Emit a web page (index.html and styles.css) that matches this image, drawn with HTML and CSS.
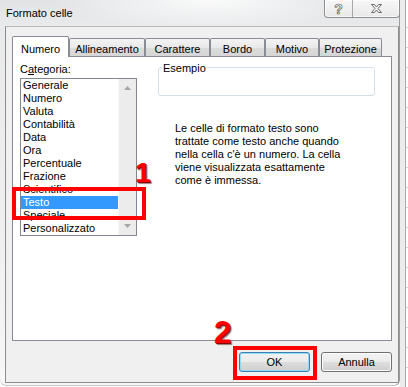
FILE: index.html
```html
<!DOCTYPE html>
<html lang="it">
<head>
  <meta charset="UTF-8" />
  <meta name="viewport" content="width=device-width, initial-scale=1.0"/>
  <title>Formato celle</title>
  <link rel="stylesheet" href="styles.css">
</head>
<body>
  <div class="screen">
    <div class="window">
      <div class="titlebar">
        <span class="title">Formato celle</span>
        <div class="caption-buttons">
          <span class="cap-btn cap-help">?</span>
          <span class="cap-btn cap-close">
            <svg width="13" height="11" viewBox="0 0 13 11">
              <polygon points="1.5,1.5 4.5,1.5 6.5,4 8.5,1.5 11.5,1.5 8,5.5 11.5,9.5 8.5,9.5 6.5,7 4.5,9.5 1.5,9.5 5,5.5" fill="#f6f6f6" stroke="#6a6a6a" stroke-width="1" stroke-linejoin="round"/>
            </svg>
          </span>
        </div>
      </div>

      <div class="client">
        <div class="tabs">
          <div class="tab active tab-numero">Numero</div>
          <div class="tab tab-allineamento">Allineamento</div>
          <div class="tab tab-carattere">Carattere</div>
          <div class="tab tab-bordo">Bordo</div>
          <div class="tab tab-motivo">Motivo</div>
          <div class="tab tab-protezione">Protezione</div>
        </div>

        <div class="panel">
          <div class="col-left">
            <div class="label">C<u>a</u>tegoria:</div>
            <div class="listbox">
              <ul class="items">
                <li>Generale</li>
                <li>Numero</li>
                <li>Valuta</li>
                <li>Contabilità</li>
                <li>Data</li>
                <li>Ora</li>
                <li>Percentuale</li>
                <li>Frazione</li>
                <li>Scientifico</li>
                <li class="selected">Testo</li>
                <li>Speciale</li>
                <li>Personalizzato</li>
              </ul>
              <div class="scrollbar">
                <svg width="7" height="4" viewBox="0 0 7 4"><polygon points="3.5,0 7,4 0,4" fill="#a6a6a6"/></svg>
                <svg width="7" height="4" viewBox="0 0 7 4"><polygon points="0,0 7,0 3.5,4" fill="#a6a6a6"/></svg>
              </div>
            </div>
          </div>

          <div class="col-right">
            <div class="sample"><span class="sample-label">Esempio</span></div>
            <p class="desc">
              Le celle di formato testo sono<br>
              trattate come testo anche quando<br>
              nella cella c'è un numero. La cella<br>
              viene visualizzata esattamente<br>
              come è immessa.
            </p>
          </div>
        </div>

        <div class="footer">
          <button class="btn default">OK</button>
          <button class="btn">Annulla</button>
        </div>
      </div>
    </div>
    <div class="sheet"></div>
  </div>

  <!-- annotazioni -->
  <div class="mark mark-list"></div>
  <div class="num num-1">1</div>
  <div class="mark mark-ok"></div>
  <div class="num num-2">2</div>
</body>
</html>
```

FILE: styles.css
```css
* {
  margin: 0;
  padding: 0;
  box-sizing: border-box;
}

body {
  width: 408px;
  height: 387px;
  position: relative;
  overflow: hidden;
  background: #fff;
  font-family: "Liberation Sans", Arial, sans-serif;
  font-size: 11px;
  color: #000;
}

.screen {
  display: flex;
  height: 387px;
}

/* finestra */
.window {
  width: 400px;
  height: 386px;
  flex-shrink: 0;
  padding-left: 5px;
  border-radius: 0 0 6px 6px;
  background:
    radial-gradient(ellipse 160px 30px at 210px 0, rgba(255,255,255,0.85), rgba(255,255,255,0)),
    linear-gradient(180deg, #e1e3e5 0, #e9eaeb 26px, #eeeeee 200px, #f7f7f7 386px);
  box-shadow: inset -1px 0 0 #9a9a9a, inset 0 -1px 0 #c4c4c4;
}

.titlebar {
  height: 26px;
  display: flex;
  align-items: flex-start;
}

.title {
  margin-left: 1px;
  line-height: 26px;
}

.caption-buttons {
  margin-left: auto;
  display: flex;
  height: 18px;
  border: 1px solid #8f8f8f;
  border-top: none;
  border-radius: 0 0 4px 4px;
  background: linear-gradient(#f7f7f7, #e9e9e9);
  box-shadow: inset 0 0 0 1px rgba(255,255,255,0.7);
}

.cap-btn {
  display: flex;
  align-items: center;
  justify-content: center;
}

.cap-help {
  width: 28px;
  border-right: 1px solid #a8a8a8;
  font-size: 14px;
  font-weight: bold;
  color: #fafafa;
  -webkit-text-stroke: 0.7px #5c5c5c;
}

.cap-close {
  width: 46px;
}

.client {
  width: 394px;
  height: 357px;
  border: 1px solid #8e8e8e;
  border-top-color: #b9b9b9;
  background: #f0f0f0;
  display: flex;
  flex-direction: column;
}

/* schede */
.tabs {
  display: flex;
  align-items: flex-end;
  height: 21px;
  margin: 9px 0 -1px 6px;
  position: relative;
  z-index: 1;
}

.tab {
  height: 18px;
  margin-bottom: 1px;
  padding-top: 4px;
  border: 1px solid #898c95;
  border-bottom: none;
  border-radius: 2px 2px 0 0;
  background: linear-gradient(#f4f4f4, #e8e8e8 50%, #dcdcdc 51%, #d6d6d6);
  text-align: center;
  line-height: 13px;
  white-space: nowrap;
}

.tab.active {
  height: 21px;
  margin-bottom: 0;
  padding-top: 6px;
  background: #fff;
}

.tab-numero { width: 57px; }
.tab-allineamento { width: 76px; }
.tab-carattere { width: 65px; }
.tab-bordo { width: 55px; }
.tab-motivo { width: 54px; }
.tab-protezione { width: 63px; }

.panel {
  margin-left: 6px;
  width: 380px;
  height: 285px;
  border: 1px solid #898c95;
  background: #fff;
  display: flex;
  padding: 6px 0 0 7px;
}

.col-left {
  width: 117px;
}

.label {
  line-height: 13px;
}

.listbox {
  margin-top: 2px;
  width: 117px;
  height: 158px;
  border: 1px solid #828790;
  display: flex;
}

.items {
  list-style: none;
  width: 97px;
}

.items li {
  height: 13px;
  line-height: 13px;
  padding-left: 2px;
  white-space: nowrap;
}

.items li.selected {
  background: #3399ff;
  color: #fff;
}

.scrollbar {
  width: 18px;
  background: #ececec;
  border-left: 1px solid #f6f6f6;
  display: flex;
  flex-direction: column;
  justify-content: space-between;
  align-items: center;
  padding: 7px 0 7px;
}

.col-right {
  margin-left: 21px;
  width: 217px;
}

.sample {
  position: relative;
  margin-top: 4px;
  height: 29px;
  border: 1px solid #d5dfe5;
  border-radius: 3px;
}

.sample-label {
  position: absolute;
  top: -6px;
  left: 3px;
  padding: 0 1px;
  background: #fff;
  line-height: 13px;
}

.desc {
  margin-top: 26px;
  padding-left: 17px;
  line-height: 13px;
  white-space: nowrap;
}

/* pulsanti */
.footer {
  flex: 1;
  display: flex;
  justify-content: flex-end;
  align-items: flex-start;
  gap: 11px;
  padding: 11px 6px 0 0;
}

.btn {
  width: 71px;
  height: 20px;
  font: inherit;
  color: #000;
  border: 1px solid #707070;
  border-radius: 3px;
  background: linear-gradient(#f2f2f2 0, #ebebeb 50%, #dddddd 51%, #cfcfcf 100%);
  box-shadow: inset 0 0 0 1px #fcfcfc;
}

.btn.default {
  border-color: #3c7fb1;
  box-shadow: inset 0 0 0 1px #8fdcf8;
}

/* foglio dietro */
.sheet {
  flex: 1;
  background:
    repeating-linear-gradient(180deg, transparent 0 19px, #d4d7dc 19px 20px) 6px 8px / 2px 100% no-repeat,
    linear-gradient(90deg, #ececec 0 5px, #a6a9ae 5px 6px, #fff 6px);
}

/* annotazioni rosse */
.mark {
  position: absolute;
  border: 4px solid #f00;
}

.mark-list {
  left: 12px;
  top: 187px;
  width: 134px;
  height: 33px;
}

.mark-ok {
  left: 233px;
  top: 346px;
  width: 84px;
  height: 34px;
}

.num {
  position: absolute;
  color: #f00;
  font-weight: bold;
  text-shadow: 1px 1px 0 #8b0000, 2px 2px 1px rgba(60,0,0,0.5);
}

.num-1 {
  left: 135px;
  top: 159px;
  font-size: 28px;
  line-height: 28px;
}

.num-2 {
  left: 214px;
  top: 317px;
  font-size: 31px;
  line-height: 31px;
}
```
